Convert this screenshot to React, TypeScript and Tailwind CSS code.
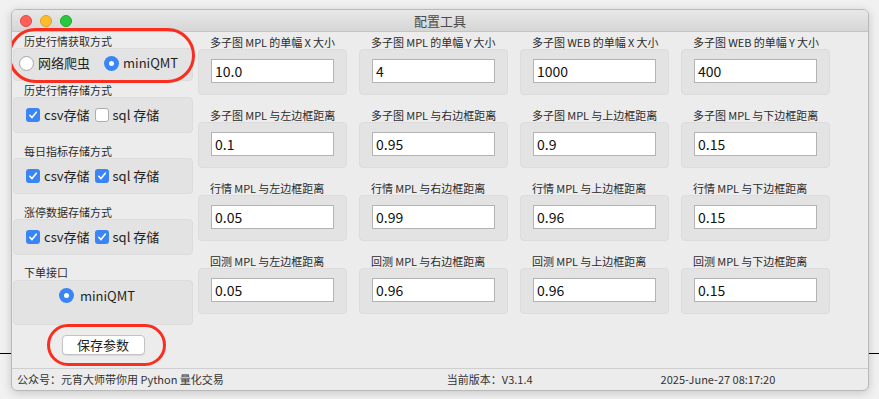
import React from 'react'

type Field = { label: string; value: string }

const FIELDS: Field[][] = [
  [
    { label: '多子图\u2009MPL\u2009的单幅\u2009X\u2009大小', value: '10.0' },
    { label: '多子图\u2009MPL\u2009的单幅\u2009Y\u2009大小', value: '4' },
    { label: '多子图\u2009WEB\u2009的单幅\u2009X\u2009大小', value: '1000' },
    { label: '多子图\u2009WEB\u2009的单幅\u2009Y\u2009大小', value: '400' },
  ],
  [
    { label: '多子图\u2009MPL\u2009与左边框距离', value: '0.1' },
    { label: '多子图\u2009MPL\u2009与右边框距离', value: '0.95' },
    { label: '多子图\u2009MPL\u2009与上边框距离', value: '0.9' },
    { label: '多子图\u2009MPL\u2009与下边框距离', value: '0.15' },
  ],
  [
    { label: '行情\u2009MPL\u2009与左边框距离', value: '0.05' },
    { label: '行情\u2009MPL\u2009与右边框距离', value: '0.99' },
    { label: '行情\u2009MPL\u2009与上边框距离', value: '0.96' },
    { label: '行情\u2009MPL\u2009与下边框距离', value: '0.15' },
  ],
  [
    { label: '回测\u2009MPL\u2009与左边框距离', value: '0.05' },
    { label: '回测\u2009MPL\u2009与右边框距离', value: '0.96' },
    { label: '回测\u2009MPL\u2009与上边框距离', value: '0.96' },
    { label: '回测\u2009MPL\u2009与下边框距离', value: '0.15' },
  ],
]

const Check = ({ on }: { on: boolean }) =>
  on ? (
    <span className="w-[14px] h-[14px] rounded-[3px] bg-[#3a85f6] flex items-center justify-center shrink-0">
      <svg width="10" height="10" viewBox="0 0 10 10" fill="none">
        <path d="M1.8 5.3 L4 7.6 L8.3 2.2" stroke="white" strokeWidth="1.6" strokeLinecap="round" strokeLinejoin="round" />
      </svg>
    </span>
  ) : (
    <span className="block w-[14px] h-[14px] rounded-[3px] bg-white border border-[#adadad] shrink-0" />
  )

const Radio = ({ on }: { on: boolean }) =>
  on ? (
    <span className="w-[15px] h-[15px] rounded-full bg-[#3a85f6] flex items-center justify-center shrink-0">
      <span className="w-[5px] h-[5px] rounded-full bg-white" />
    </span>
  ) : (
    <span className="block w-[15px] h-[15px] rounded-full bg-white border border-[#a6a6a6] shrink-0" />
  )

const GroupLabel = ({ children, className = '' }: { children: React.ReactNode; className?: string }) => (
  <div className={`h-[14px] leading-[14px] pl-[11px] text-[11px] text-[#2b2b2b] ${className}`}>{children}</div>
)

const StoreRow = ({ csv, sql }: { csv: boolean; sql: boolean }) => (
  <div className="h-[36px] rounded-[4px] bg-[#e3e3e3] border border-[#dcdcdc] flex items-center pl-[12px] text-[13px] text-[#1f1f1f]">
    <Check on={csv} />
    <span className="ml-[4px]">csv存储</span>
    <span className="ml-[5px]"><Check on={sql} /></span>
    <span className="ml-[4px]">sql 存储</span>
  </div>
)

export default function App() {
  return (
    <div className="relative w-[879px] h-[399px] bg-[#f1f1f1] pl-[11px] pt-[9px] font-['Noto_Sans_CJK_SC','Noto_Sans',sans-serif] overflow-hidden">
      <div className="absolute left-0 top-[353px] w-[12px] h-px bg-black" />
      <div className="absolute right-0 top-[353px] w-[12px] h-px bg-black" />

      <div className="relative w-[858px] h-[382px] rounded-[6px] border border-[#b9b9b9] bg-[#ececec] shadow-[0_2px_10px_rgba(0,0,0,0.18)] flex flex-col overflow-hidden">
        {/* title bar */}
        <div className="h-[22px] shrink-0 bg-gradient-to-b from-[#e8e8e8] to-[#d6d6d6] border-b border-[#c4c4c4] relative flex items-center justify-center">
          <div className="absolute left-[8px] top-[5px] flex gap-[8px]">
            <span className="w-[12px] h-[12px] rounded-full bg-[#fe5f57] border border-[#e2463f]" />
            <span className="w-[12px] h-[12px] rounded-full bg-[#febc2e] border border-[#dfa023]" />
            <span className="w-[12px] h-[12px] rounded-full bg-[#28c840] border border-[#1aab29]" />
          </div>
          <span className="text-[13px] text-[#4a4a4a]">配置工具</span>
        </div>

        {/* body */}
        <div className="flex-1 flex">
          {/* left column */}
          <div className="w-[180px] ml-[1px] pt-[2px] flex flex-col">
            <GroupLabel>历史行情获取方式</GroupLabel>
            <div className="h-[33px] rounded-[4px] bg-[#e3e3e3] border border-[#dcdcdc] flex items-center pl-[5px] pb-[3px] text-[13px] text-[#1f1f1f]">
              <Radio on={false} />
              <span className="ml-[4px]">网络爬虫</span>
              <span className="ml-[14px]"><Radio on={true} /></span>
              <span className="ml-[4px]">miniQMT</span>
            </div>

            <GroupLabel className="mt-[2px]">历史行情存储方式</GroupLabel>
            <StoreRow csv={true} sql={false} />

            <GroupLabel className="mt-[11px]">每日指标存储方式</GroupLabel>
            <StoreRow csv={true} sql={true} />

            <GroupLabel className="mt-[11px]">涨停数据存储方式</GroupLabel>
            <StoreRow csv={true} sql={true} />

            <GroupLabel className="mt-[10px]">下单接口</GroupLabel>
            <div className="h-[45px] mt-[1px] rounded-[4px] bg-[#e3e3e3] border border-[#dcdcdc] flex justify-center pt-[6px] pr-[12px] text-[13px] text-[#1f1f1f]">
              <div className="flex items-start gap-[6px]">
                <span className="mt-[1px]"><Radio on={true} /></span>
                <span className="leading-[17px]">miniQMT</span>
              </div>
            </div>

            <div className="flex justify-center mt-[10px]">
              <button className="w-[83px] h-[20px] rounded-[4px] bg-white border border-[#c3c3c3] shadow-[0_1px_1px_rgba(0,0,0,0.08)] text-[13px] leading-[18px] text-[#1f1f1f]">
                保存参数
              </button>
            </div>
          </div>

          {/* right grid */}
          <div className="ml-[5px] pt-[4px] flex flex-col gap-[14px]">
            {FIELDS.map((row, ri) => (
              <div key={ri} className="grid grid-cols-[149px_149px_149px_149px] gap-x-[12px]">
                {row.map((f) => (
                  <div key={f.label} className="flex flex-col">
                    <div className="h-[13px] leading-[13px] pl-[12px] text-[11px] text-[#2b2b2b] whitespace-nowrap">{f.label}</div>
                    <div className="h-[46px] rounded-[4px] bg-[#e3e3e3] border border-[#dcdcdc] pl-[12px] pt-[9px]">
                      <div className="w-[123px] h-[24px] bg-white border border-[#b3b3b3] pl-[3px] text-[14px] leading-[22px] text-[#111]">
                        {f.value}
                      </div>
                    </div>
                  </div>
                ))}
              </div>
            ))}
          </div>
        </div>

        {/* status bar */}
        <div className="h-[22px] shrink-0 border-t border-[#cfcfcf] flex items-center text-[11px] text-[#333]">
          <span className="ml-[5px]">公众号：元宵大师带你用 Python 量化交易</span>
          <span className="ml-[223px]">当前版本：V3.1.4</span>
          <span className="ml-[128px]">2025-June-27 08:17:20</span>
        </div>

        {/* annotations */}
        <div className="absolute left-[-4px] top-[18px] w-[187px] h-[55px] rounded-[28px] border-[3px] border-[#fb2d1f]" />
        <div className="absolute left-[35px] top-[314px] w-[119px] h-[42px] rounded-full border-[3px] border-[#fb2d1f]" />
      </div>
    </div>
  )
}
